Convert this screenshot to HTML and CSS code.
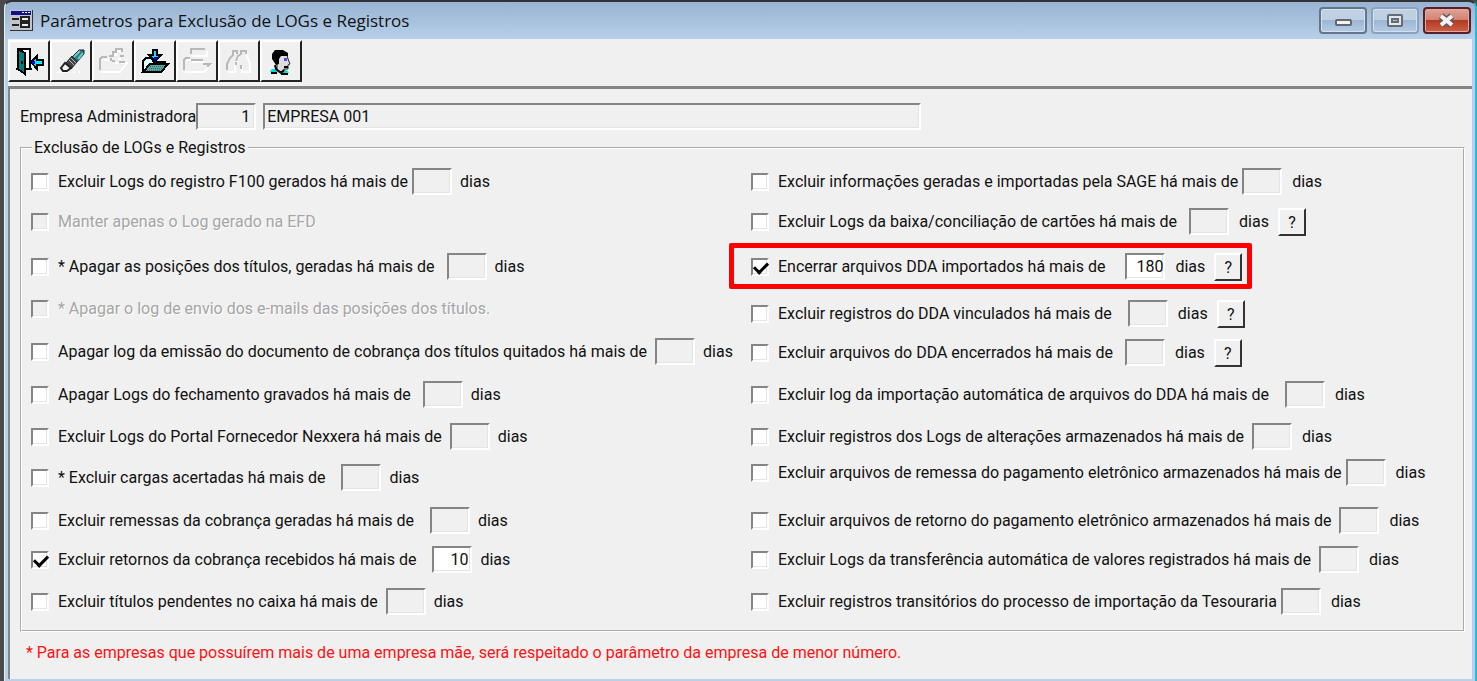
FILE: index.html
```html
<!DOCTYPE html>
<html lang="pt-BR">
<head>
  <meta charset="UTF-8">
  <meta name="viewport" content="width=device-width, initial-scale=1.0">
  <title>Parâmetros para Exclusão de LOGs e Registros</title>
  <link rel="stylesheet" href="styles.css">
</head>
<body>
  <div class="window">

    <!-- Title bar -->
    <header class="titlebar">
      <svg class="app-icon" viewBox="0 0 23 21" shape-rendering="crispEdges">
        <rect width="23" height="21" fill="#333"/>
        <rect width="22" height="20" fill="#c4c4cc"/>
        <rect x="1" y="1" width="20" height="4" fill="#10108c"/>
        <path d="M12 2h2v1h-2zM15 2h2v1h-2zM18 2h2v1h-2z" fill="#fff"/>
        <path d="M2 8h7v2H2zM2 14h7v2H2z" fill="#222"/>
        <path d="M11 7h8v4h-8zM11 13h8v4h-8z" fill="#eee" stroke="#222" stroke-width="2"/>
      </svg>
      <h1 class="title">Parâmetros para Exclusão de LOGs e Registros</h1>
      <div class="window-buttons">
        <button class="win-btn" aria-label="Minimizar">
          <svg width="18" height="16"><rect x="2" y="7" width="15" height="5" rx="1" fill="#f2f2f2" stroke="#63686f" stroke-width="2"/></svg>
        </button>
        <button class="win-btn win-btn-max" aria-label="Maximizar">
          <svg width="18" height="16"><rect x="2" y="2" width="14" height="11" rx="1" fill="#e4e6ea" stroke="#666c76" stroke-width="2"/><rect x="6" y="6" width="6" height="3" fill="#a9c3de" stroke="#666c76" stroke-width="2"/></svg>
        </button>
        <button class="win-btn win-btn-close" aria-label="Fechar">
          <svg width="18" height="16"><path d="M3 3l11 9M14 3L3 12" stroke="#6b5560" stroke-width="7"/><path d="M3 3l11 9M14 3L3 12" stroke="#f4f4f4" stroke-width="4"/></svg>
        </button>
      </div>
    </header>

    <!-- Toolbar -->
    <nav class="toolbar">
      <button class="tool" aria-label="Sair">
        <svg width="30" height="30" shape-rendering="crispEdges">
          <path d="M2 23h16" stroke="#000" stroke-width="2"/>
          <rect x="4" y="3" width="12" height="20" fill="#fff" stroke="#000" stroke-width="2"/>
          <path d="M4 3l7 4v21l-7-5z" fill="#00807c" stroke="#000" stroke-width="2"/>
          <path d="M8 15v3" stroke="#000" stroke-width="2"/>
          <path d="M17 16l6-6v4h6v5h-6v4z" fill="#00f0f8" stroke="#000" stroke-width="2"/>
          <path d="M18 15h3v3h-3z" fill="#0000f0"/>
        </svg>
      </button>
      <button class="tool" aria-label="Limpar">
        <svg width="30" height="30">
          <path d="M1 26h12M17 26h2M22 26h2" stroke="#fff" stroke-width="2"/>
          <path d="M16 11l7-7h5v4l-8 9z" fill="#187f80" stroke="#222"/>
          <path d="M18 11l6-6M22 13l5-6" stroke="#79c5c5" stroke-width="2"/>
          <path d="M10 17l6-7 5 6-6 7z" fill="#444" stroke="#222"/>
          <path d="M13 14l5 5M15 12l5 5" stroke="#bbb"/>
          <path d="M9 17l6 5-4 3H7l-2-3z" fill="#f4f4f4" stroke="#222" stroke-width="2"/>
        </svg>
      </button>
      <button class="tool" aria-label="Incluir" disabled>
        <svg width="30" height="30" fill="none" stroke-width="2" shape-rendering="crispEdges">
          <path d="M3 26h19l7-9h-6M6 14h5M14 9h4v-4h6M20 13h3M17 17h4" stroke="#fff"/>
          <path d="M2 24V13l2-2h5M11 10h4V6h3V3h6v3M14 15h3M22 10h4M13 12v3M21 16h6" stroke="#b8b8b8"/>
        </svg>
      </button>
      <button class="tool" aria-label="Gravar">
        <svg width="30" height="30" shape-rendering="crispEdges">
          <path d="M3 25V15l3-3h5l3 4h11v5" fill="#dff" stroke="#000" stroke-width="2"/>
          <path d="M3 26l7-8h18l-7 8z" fill="#5fa3a2" stroke="#000" stroke-width="2"/>
          <path d="M10 20h14M9 22h13M7 24h13" stroke="#2f7776" stroke-dasharray="1 1"/>
          <path d="M13 4h4v5h4l-6 6-6-6h4z" fill="#00e8f8" stroke="#000" stroke-width="2"/>
          <path d="M14 11h3v3h-3z" fill="#0000f0"/>
        </svg>
      </button>
      <button class="tool" aria-label="Excluir" disabled>
        <svg width="30" height="30" fill="none" stroke-width="2" shape-rendering="crispEdges">
          <path d="M3 26h19l7-8M4 14h5M11 10h14V5M10 16h12" stroke="#fff"/>
          <path d="M2 24V14l2-2h4M9 8V3h14M9 14h12M21 18h7l-3 3" stroke="#b8b8b8"/>
        </svg>
      </button>
      <button class="tool" aria-label="Localizar" disabled>
        <svg width="30" height="30" fill="none" stroke-width="2">
          <path d="M4 26h7v-6l4-11h2M18 20v6h8v-8l-3-8 1-3" stroke="#fff"/>
          <path d="M3 24v-6l3-6 3-3V5h4v3M12 15l2-5 3-2V5h5v3M17 19v4M12 19v-3" stroke="#b8b8b8"/>
        </svg>
      </button>
      <button class="tool" aria-label="Usuário">
        <svg width="30" height="30">
          <path d="M12 9h9l1 4 2 5-2 1v4h-4v4l-7-3V12z" fill="#ddd" stroke="#222"/>
          <path d="M6 8l3-4h8l5 3v3h-7l-2 3v5l-3 1-4-6z" fill="#000"/>
          <path d="M4 26c1-4 4-3 7-2l4 3 3-3c3 0 4 1 5 3z" fill="#00d8e0"/>
          <path d="M9 19l1 4 5 4 3-3M5 27h6M15 28h7M18 21h4" fill="none" stroke="#000" stroke-width="2"/>
          <path d="M18 12h3v3h-3z" fill="#5050e0"/>
        </svg>
      </button>
    </nav>

    <!-- Form -->
    <main class="panel">
      <div class="company">
        <label for="empresa">Empresa Administradora</label>
        <input class="field company-code" id="empresa" type="text" value="1" readonly>
        <input class="field company-name" type="text" value="EMPRESA 001" aria-label="Nome da empresa" readonly>
      </div>

      <fieldset class="group">
        <legend>Exclusão de LOGs e Registros</legend>
        <div class="columns">

          <div class="column column-left">
            <div class="row gap-xs">
              <label class="option"><input type="checkbox">Excluir Logs do registro F100 gerados há mais de</label>
              <label class="days"><input class="field" type="text" disabled>dias</label>
            </div>
            <div class="row">
              <label class="option off"><input type="checkbox" disabled>Manter apenas o Log gerado na EFD</label>
            </div>
            <div class="row">
              <label class="option"><input type="checkbox">* Apagar as posições dos títulos, geradas há mais de</label>
              <label class="days"><input class="field" type="text" disabled>dias</label>
            </div>
            <div class="row">
              <label class="option off"><input type="checkbox" disabled>* Apagar o log de envio dos e-mails das posições dos títulos.</label>
            </div>
            <div class="row gap-s">
              <label class="option"><input type="checkbox">Apagar log da emissão do documento de cobrança dos títulos quitados há mais de</label>
              <label class="days"><input class="field" type="text" disabled>dias</label>
            </div>
            <div class="row">
              <label class="option"><input type="checkbox">Apagar Logs do fechamento gravados há mais de</label>
              <label class="days"><input class="field" type="text" disabled>dias</label>
            </div>
            <div class="row gap-s">
              <label class="option"><input type="checkbox">Excluir Logs do Portal Fornecedor Nexxera há mais de</label>
              <label class="days"><input class="field" type="text" disabled>dias</label>
            </div>
            <div class="row gap-l">
              <label class="option"><input type="checkbox">* Excluir cargas acertadas há mais de</label>
              <label class="days"><input class="field" type="text" disabled>dias</label>
            </div>
            <div class="row gap-l">
              <label class="option"><input type="checkbox">Excluir remessas da cobrança geradas há mais de</label>
              <label class="days"><input class="field" type="text" disabled>dias</label>
            </div>
            <div class="row gap-l">
              <label class="option"><input type="checkbox" checked>Excluir retornos da cobrança recebidos há mais de</label>
              <label class="days"><input class="field" type="text" value="10">dias</label>
            </div>
            <div class="row gap-s">
              <label class="option"><input type="checkbox">Excluir títulos pendentes no caixa há mais de</label>
              <label class="days"><input class="field" type="text" disabled>dias</label>
            </div>
          </div>

          <div class="column column-right">
            <div class="row gap-xs">
              <label class="option"><input type="checkbox">Excluir informações geradas e importadas pela SAGE há mais de</label>
              <label class="days"><input class="field" type="text" disabled>dias</label>
            </div>
            <div class="row">
              <label class="option"><input type="checkbox">Excluir Logs da baixa/conciliação de cartões há mais de</label>
              <label class="days"><input class="field" type="text" disabled>dias</label>
              <button class="help">?</button>
            </div>
            <div class="row gap-xl highlight">
              <label class="option"><input type="checkbox" checked>Encerrar arquivos DDA importados há mais de</label>
              <label class="days"><input class="field typing" type="text" value="180">dias</label>
              <button class="help">?</button>
            </div>
            <div class="row gap-l">
              <label class="option"><input type="checkbox">Excluir registros do DDA vinculados há mais de</label>
              <label class="days"><input class="field" type="text" disabled>dias</label>
              <button class="help">?</button>
            </div>
            <div class="row">
              <label class="option"><input type="checkbox">Excluir arquivos do DDA encerrados há mais de</label>
              <label class="days"><input class="field" type="text" disabled>dias</label>
              <button class="help">?</button>
            </div>
            <div class="row gap-l">
              <label class="option"><input type="checkbox">Excluir log da importação automática de arquivos do DDA há mais de</label>
              <label class="days"><input class="field" type="text" disabled>dias</label>
            </div>
            <div class="row gap-s">
              <label class="option"><input type="checkbox">Excluir registros dos Logs de alterações armazenados há mais de</label>
              <label class="days"><input class="field" type="text" disabled>dias</label>
            </div>
            <div class="row gap-xs">
              <label class="option"><input type="checkbox">Excluir arquivos de remessa do pagamento eletrônico armazenados há mais de</label>
              <label class="days"><input class="field" type="text" disabled>dias</label>
            </div>
            <div class="row gap-s">
              <label class="option"><input type="checkbox">Excluir arquivos de retorno do pagamento eletrônico armazenados há mais de</label>
              <label class="days"><input class="field" type="text" disabled>dias</label>
            </div>
            <div class="row gap-s">
              <label class="option"><input type="checkbox">Excluir Logs da transferência automática de valores registrados há mais de</label>
              <label class="days"><input class="field" type="text" disabled>dias</label>
            </div>
            <div class="row gap-xs">
              <label class="option"><input type="checkbox">Excluir registros transitórios do processo de importação da Tesouraria</label>
              <label class="days"><input class="field" type="text" disabled>dias</label>
            </div>
          </div>

        </div>
      </fieldset>

      <p class="note">* Para as empresas que possuírem mais de uma empresa mãe, será respeitado o parâmetro da empresa de menor número.</p>
    </main>
  </div>
</body>
</html>
```
FILE: styles.css
```css
* {
  box-sizing: border-box;
}

body {
  margin: 0;
  background: #4a4a4a;
  color: #111;
  font-family: Roboto, "Liberation Sans", sans-serif;
  font-size: 16px;
  line-height: 20px;
}

button,
input {
  font: inherit;
  color: inherit;
}

.window {
  display: flex;
  flex-direction: column;
  min-height: 100vh;
  margin-left: 4px;
  padding: 0 3px 2px 3px;
  border-top: 2px solid #333;
  border-left: 1px solid #e8eef6;
  border-right: 2px solid #2fb4dc;
  border-radius: 8px 8px 0 0;
  background: linear-gradient(#98b4d2, #b8d0ea 38px);
}

/* Title bar */
.titlebar {
  display: flex;
  align-items: center;
  height: 37px;
  padding: 0 1px 0 2px;
  gap: 7px;
}

.app-icon {
  width: 23px;
  height: 21px;
}

.title {
  flex: 1;
  margin: 0;
  font-family: "Open Sans", sans-serif;
  font-size: 17px;
  font-weight: 400;
}

.window-buttons {
  display: flex;
  gap: 4px;
}

.win-btn {
  display: flex;
  align-items: center;
  justify-content: center;
  width: 48px;
  height: 27px;
  padding: 0;
  border: 2px solid #64748a;
  border-radius: 4px;
  background: linear-gradient(#bfd0e3 50%, #9bb6d4 50%, #b6cce4);
  box-shadow: inset 0 0 0 1px #d5e1ef;
}

.win-btn-max {
  border-color: #8da2bd;
}

.win-btn-close {
  border-color: #57202a;
  background: linear-gradient(#e0a398, #d1806f 50%, #b23a20 50%, #cc6148);
  box-shadow: inset 0 0 0 1px #e3aa9c;
}

/* Toolbar */
.toolbar {
  display: flex;
  padding: 1px 0 4px;
  background: #f0f0f0;
}

.tool {
  display: flex;
  align-items: center;
  justify-content: center;
  width: 42px;
  height: 42px;
  padding: 0;
  border: 2px solid;
  border-color: #fff #222 #222 #fff;
  background: #f0f0f0;
}

/* Form */
.panel {
  flex: 1;
  padding: 14px 7px 4px 10px;
  border-top: 3px solid #858585;
  border-left: 2px solid #858585;
  background: #f0f0f0;
}

.company {
  display: flex;
  align-items: center;
}

.field {
  width: 40px;
  height: 27px;
  padding: 0 2px;
  border: 2px solid;
  border-color: #858585 #fff #fff #858585;
  border-radius: 0;
  background: #fff;
  box-shadow: inset -1px -1px #e4e4e4;
  text-align: right;
}

.field:disabled,
.field:read-only {
  background: #f0f0f0;
}

.company-code {
  width: 60px;
  padding-right: 4px;
}

.company-name {
  flex: 0 1 658px;
  margin-left: 7px;
  text-align: left;
}

.group {
  min-width: 0;
  margin: 8px 0 0;
  padding: 0 0 4px 9px;
  border: 2px groove #fff;
}

.group legend {
  margin-left: 1px;
  padding: 0 2px;
}

.columns {
  display: grid;
  grid-template-columns: 1fr 1fr;
  column-gap: 8px;
  padding-top: 10px;
}

.column {
  display: grid;
  align-items: start;
  justify-items: start;
}

.column-left {
  grid-template-rows: 40px 45px 42px 43px 43px 42px 41px 43px 39px 42px 38px;
}

.column-right {
  grid-template-rows: 40px 45px 47px 39px 42px 42px 36px 48px 39px 42px 38px;
}

.row {
  display: flex;
  align-items: center;
  height: 27px;
  white-space: nowrap;
}

.option {
  display: flex;
  align-items: center;
  gap: 9px;
  margin-right: 12px;
}

.gap-xs .option {
  margin-right: 4px;
}

.gap-s .option {
  margin-right: 8px;
}

.gap-l .option {
  margin-right: 16px;
}

.gap-xl .option {
  margin-right: 20px;
}

.option.off {
  color: #a5a5a5;
  text-shadow: 1px 1px #fff;
}

.option input {
  appearance: none;
  width: 18px;
  height: 18px;
  margin: 0;
  border: 2px solid;
  border-color: #858585 #fff #fff #858585;
  background: #fff;
  box-shadow: inset -1px -1px #e4e4e4;
}

.option input:disabled {
  background: #f0f0f0;
}

.option input:checked::before {
  content: "";
  display: block;
  width: 11px;
  height: 6px;
  margin: 2px 0 0 1px;
  border: solid #000;
  border-width: 0 0 3px 3px;
  transform: rotate(-45deg);
}

.days {
  display: flex;
  align-items: center;
  gap: 8px;
}

.column-right .days {
  gap: 10px;
}

.typing {
  padding: 0 0 0 9px;
  text-align: left;
}

.help {
  width: 28px;
  height: 28px;
  margin-left: 9px;
  padding: 2px 0 0;
  border: 2px solid;
  border-color: #fff #333 #333 #fff;
  background: #f0f0f0;
}

.highlight {
  position: relative;
}

.highlight::after {
  content: "";
  position: absolute;
  inset: -10px -10px -9px -22px;
  border: 5px solid #f00;
  border-radius: 2px;
  pointer-events: none;
}

.note {
  margin: 11px 0 0 6px;
  color: #f11;
}
```
